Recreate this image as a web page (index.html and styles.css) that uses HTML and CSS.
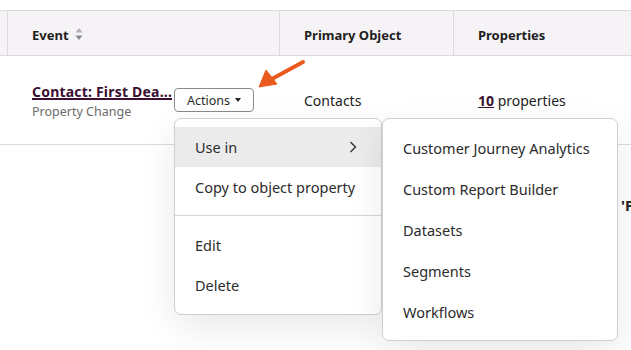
FILE: index.html
```html
<!DOCTYPE html>
<html>
<head>
<meta charset="utf-8">
<link rel="stylesheet" href="styles.css">
</head>
<body>
<div class="page">
  <div class="table">
    <div class="row head">
      <div class="cell gutter"></div>
      <div class="cell bordered"><span class="th">Event</span>
        <svg class="sort" width="8" height="14" viewBox="0 0 8 14"><path d="M4 1 L7.5 5.5 H0.5 Z" fill="#b3b0b6"/><path d="M4 13 L7.5 8.5 H0.5 Z" fill="#8a878d"/></svg>
      </div>
      <div class="cell bordered"><span class="th">Primary Object</span></div>
      <div class="cell bordered"><span class="th">Properties</span></div>
    </div>
    <div class="row body">
      <div class="cell gutter"></div>
      <div class="cell event">
        <div class="event-text">
          <a class="link title">Contact: First Dea...</a>
          <span class="sub">Property Change</span>
        </div>
        <button class="actions">Actions <span class="caret"></span></button>
      </div>
      <div class="cell plain">Contacts</div>
      <div class="cell plain"><a class="link num">10</a>&nbsp;properties</div>
    </div>
  </div>
  <div class="hidden-text">'P</div>

  <svg class="arrow" width="60" height="40" viewBox="0 0 60 40">
    <line x1="49" y1="6" x2="16" y2="24" stroke="#ea5a1f" stroke-width="4" stroke-linecap="round"/>
    <path d="M5 31 L12 14 L23 28 Z" fill="#ea5a1f" stroke="#ea5a1f" stroke-width="1" stroke-linejoin="round"/>
  </svg>

  <div class="menu main">
    <div class="item active">Use in <svg class="chev" width="8" height="12" viewBox="0 0 8 12"><path d="M1.5 1 L6.5 6 L1.5 11" fill="none" stroke="#333" stroke-width="1.4"/></svg></div>
    <div class="item">Copy to object property</div>
    <div class="divider"></div>
    <div class="item">Edit</div>
    <div class="item">Delete</div>
  </div>
  <div class="menu sub-menu">
    <div class="item">Customer Journey Analytics</div>
    <div class="item">Custom Report Builder</div>
    <div class="item">Datasets</div>
    <div class="item">Segments</div>
    <div class="item">Workflows</div>
  </div>
</div>
</body>
</html>
```

FILE: styles.css
```css
* { box-sizing: border-box; }
html, body { margin: 0; padding: 0; background: #fff; }
body {
  font-family: "Noto Sans", "Open Sans", sans-serif;
  color: #2b2b2b;
  width: 631px;
  height: 350px;
  overflow: hidden;
}
.page { position: relative; width: 631px; height: 350px; padding-top: 10px; overflow: hidden; }
.row {
  display: grid;
  grid-template-columns: 7px 272px 174px 1fr;
}
.head {
  height: 46px;
  background: #f5f3f6;
  border-top: 1px solid #dcd9dd;
  border-bottom: 1px solid #dcd9dd;
}
.cell { display: flex; align-items: center; }
.bordered { border-left: 1px solid #dcd9dd; padding-left: 24px; padding-top: 3px; }
.th { font-size: 13px; font-weight: 700; color: #1e1e1e; }
.sort { margin-left: 6px; margin-top: -2px; }
.body { height: 89px; border-bottom: 1px solid #dcdcdc; }
.event { padding-left: 25px; align-items: center; padding-top: 2px; }
.event-text { display: flex; flex-direction: column; }
.link { color: #3b0f31; text-decoration: underline; font-weight: 700; }
.title { font-size: 14px; letter-spacing: 0.2px; text-decoration-thickness: 1.5px; }
.sub { font-size: 12.5px; color: #6b6b6b; margin-top: 2px; }
.actions {
  align-self: flex-start;
  margin-left: 2px;
  margin-top: 30px;
  height: 24px;
  width: 80px;
  font-family: inherit;
  font-size: 12.5px;
  color: #2b2b2b;
  background: #fff;
  border: 1px solid #8a8a8a;
  border-radius: 4px;
  display: flex; align-items: center; justify-content: center; gap: 5px;
  padding: 0;
}
.caret { width: 0; height: 0; border-left: 3.5px solid transparent; border-right: 3.5px solid transparent; border-top: 4px solid #222; }
.plain { padding-left: 25px; font-size: 14px; color: #222; }
.num { font-size: 14px; }
.hidden-text {
  position: absolute; left: 621px; top: 195px;
  font-size: 15px; font-weight: 700; color: #222; white-space: nowrap;
}
.arrow { position: absolute; left: 254px; top: 56px; }
.menu {
  position: absolute;
  top: 118px;
  background: #fff;
  border: 1px solid #cfcfcf;
  border-radius: 7px;
  box-shadow: 0 12px 36px rgba(0,0,0,0.09);
  font-size: 14.5px;
  color: #2b2b2b;
}
.main { left: 174px; width: 208px; padding: 8px 0 9px; }
.sub-menu { left: 382px; width: 236px; padding: 8px 0 8px; }
.item { height: 41px; display: flex; align-items: center; padding-left: 20px; }
.main .item { height: 40px; }
.active { background: #ebebeb; justify-content: space-between; padding-right: 24px; }
.divider { height: 1px; background: #d6d6d6; margin: 8px 0 9px; }
```
